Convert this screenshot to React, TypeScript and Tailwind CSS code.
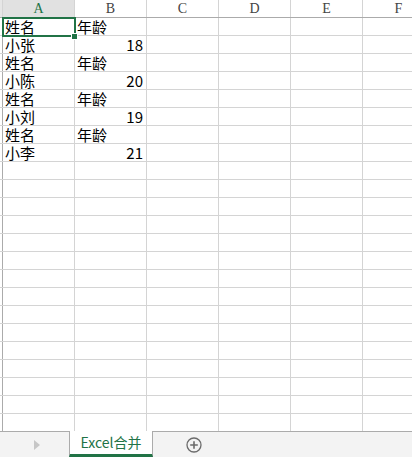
import React from 'react';

const cols = ['A', 'B', 'C', 'D', 'E', 'F'];

const data: [string, string][] = [
  ['姓名', '年龄'],
  ['小张', '18'],
  ['姓名', '年龄'],
  ['小陈', '20'],
  ['姓名', '年龄'],
  ['小刘', '19'],
  ['姓名', '年龄'],
  ['小李', '21'],
];

const TOTAL_ROWS = 23;

function Cell({ value, first }: { value?: string; first?: boolean }) {
  const isNum = value !== undefined && /^\d+$/.test(value);
  return (
    <div
      className={`w-[72px] shrink-0 h-full border-r border-[#d4d4d4] flex items-center px-[2px] text-[15px] leading-[17px] text-black whitespace-nowrap ${
        isNum ? 'justify-end pr-[3px]' : 'justify-start'
      } ${first ? 'pl-[2px]' : ''}`}
    >
      {value}
    </div>
  );
}

export default function App() {
  const rows = Array.from({ length: TOTAL_ROWS }, (_, i) => data[i]);

  return (
    <div
      className="w-[412px] h-[457px] bg-white flex flex-col overflow-hidden"
      style={{ fontFamily: '"Noto Sans CJK SC", "Liberation Sans", sans-serif' }}
    >
      {/* Grid */}
      <div className="relative flex-1 overflow-hidden">
        {/* Column header */}
        <div className="flex h-[18px] border-b border-[#ababab] bg-white">
          <div className="w-[3px] shrink-0 bg-[#e6e6e6] border-r border-[#d4d4d4]" />
          {cols.map((c, i) => (
            <div
              key={c}
              className={`w-[72px] shrink-0 h-full flex items-center justify-center border-r border-[#d4d4d4] text-[14px] leading-[17px] ${
                i === 0 ? 'bg-[#e1e1e1] text-[#217346]' : 'text-[#444]'
              }`}
              style={{ fontFamily: '"Liberation Serif", "DejaVu Serif", serif' }}
            >
              {c}
            </div>
          ))}
        </div>

        {/* Rows */}
        {rows.map((r, i) => (
          <div key={i} className="flex h-[18px] border-b border-[#d4d4d4]">
            <div className="w-[3px] shrink-0 h-full border-r border-[#ababab]" />
            <Cell value={r?.[0]} first />
            <Cell value={r?.[1]} />
            <Cell />
            <Cell />
            <Cell />
            <Cell />
          </div>
        ))}

        {/* Selection box on A1 */}
        <div className="absolute left-[2px] top-[17px] w-[74px] h-[20px] border-2 border-[#217346] pointer-events-none" />
        <div className="absolute left-[71px] top-[33px] w-[7px] h-[7px] bg-[#217346] border border-white" />
      </div>

      {/* Sheet tabs */}
      <div className="h-[26px] shrink-0 flex bg-[#f3f3f3] border-t border-[#ababab]">
        <div className="w-[69px] flex items-center justify-center pl-[4px]">
          <svg width="6" height="10" viewBox="0 0 6 10">
            <path d="M0 0 L6 5 L0 10 Z" fill="#c6c6c6" />
          </svg>
        </div>
        <div className="w-[84px] -mt-px bg-white border-x border-[#ababab] border-b-[3px] border-b-[#217346] flex items-center justify-center text-[14px] text-[#217346]">
          Excel合并
        </div>
        <div className="w-[82px] flex items-center justify-center">
          <svg width="16" height="16" viewBox="0 0 16 16">
            <circle cx="8" cy="8" r="7" fill="none" stroke="#6b6b6b" strokeWidth="1.3" />
            <path d="M8 4.2 V11.8 M4.2 8 H11.8" stroke="#6b6b6b" strokeWidth="1.6" />
          </svg>
        </div>
      </div>
    </div>
  );
}
